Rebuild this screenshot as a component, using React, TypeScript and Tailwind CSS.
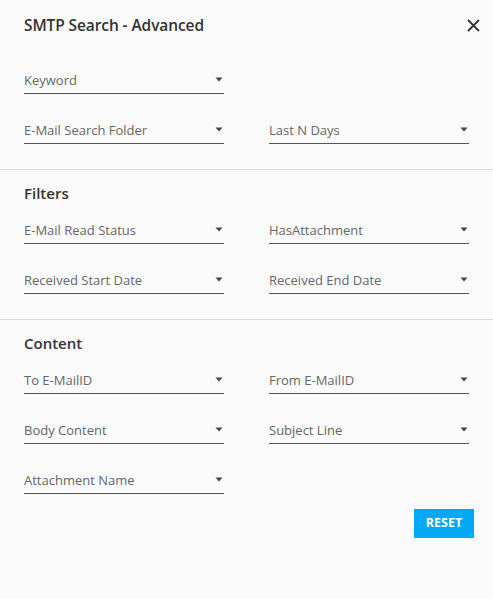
import React from 'react';

type Field = { label: string } | null;

const SECTIONS: { title?: string; rows: [Field, Field][] }[] = [
  {
    rows: [
      [{ label: 'Keyword' }, null],
      [{ label: 'E-Mail Search Folder' }, { label: 'Last N Days' }],
    ],
  },
  {
    title: 'Filters',
    rows: [
      [{ label: 'E-Mail Read Status' }, { label: 'HasAttachment' }],
      [{ label: 'Received Start Date' }, { label: 'Received End Date' }],
    ],
  },
  {
    title: 'Content',
    rows: [
      [{ label: 'To E-MailID' }, { label: 'From E-MailID' }],
      [{ label: 'Body Content' }, { label: 'Subject Line' }],
      [{ label: 'Attachment Name' }, null],
    ],
  },
];

function Caret() {
  return (
    <svg width="8" height="5" viewBox="0 0 8 5" className="absolute right-[1px] top-[13px]">
      <path d="M0.5 0.5 L7.5 0.5 L4 4.5 Z" fill="#444" />
    </svg>
  );
}

function SelectField({ label }: { label: string }) {
  return (
    <div className="relative h-[30px] border-b border-[#555] cursor-pointer">
      <span className="absolute left-0 bottom-[4px] text-[13px] leading-[18px] text-[#666]">{label}</span>
      <Caret />
    </div>
  );
}

export default function App() {
  return (
    <div
      className="min-h-screen w-full bg-[#fafafa] text-[#333]"
      style={{ fontFamily: '"Open Sans", "Noto Sans", sans-serif' }}
    >
      <div className="flex items-center justify-between pl-6 pr-[13px] pt-[13px]">
        <h1 className="text-[15.5px] leading-[24px] font-semibold tracking-[-0.1px] text-[#333]">SMTP Search - Advanced</h1>
        <button className="w-[14px] h-[14px] flex items-center justify-center">
          <svg width="13" height="13" viewBox="0 0 13 13">
            <path d="M1 1 L12 12 M12 1 L1 12" stroke="#333" strokeWidth="1.8" />
          </svg>
        </button>
      </div>

      {SECTIONS.map((section, i) => (
        <div key={i} className={i > 0 ? 'border-t border-[#dcdcdc]' : ''}>
          <div className={`px-6 ${i === 0 ? 'pt-[27px]' : 'pt-[11px]'} pb-[25px]`}>
            {section.title && (
              <h2 className="text-[15px] leading-[24px] font-semibold text-[#333] mb-[9px]">{section.title}</h2>
            )}
            <div className="flex flex-col gap-5">
              {section.rows.map((row, r) => (
                <div key={r} className="grid grid-cols-2 gap-x-[45px]">
                  {row.map((f, c) => (f ? <SelectField key={c} label={f.label} /> : <div key={c} />))}
                </div>
              ))}
            </div>
          </div>
        </div>
      ))}

      <div className="flex justify-end pr-[19px] -mt-[10px]">
        <button className="w-[60px] h-[29px] bg-[#03a9f4] text-white text-[12.5px] font-bold">RESET</button>
      </div>
    </div>
  );
}
